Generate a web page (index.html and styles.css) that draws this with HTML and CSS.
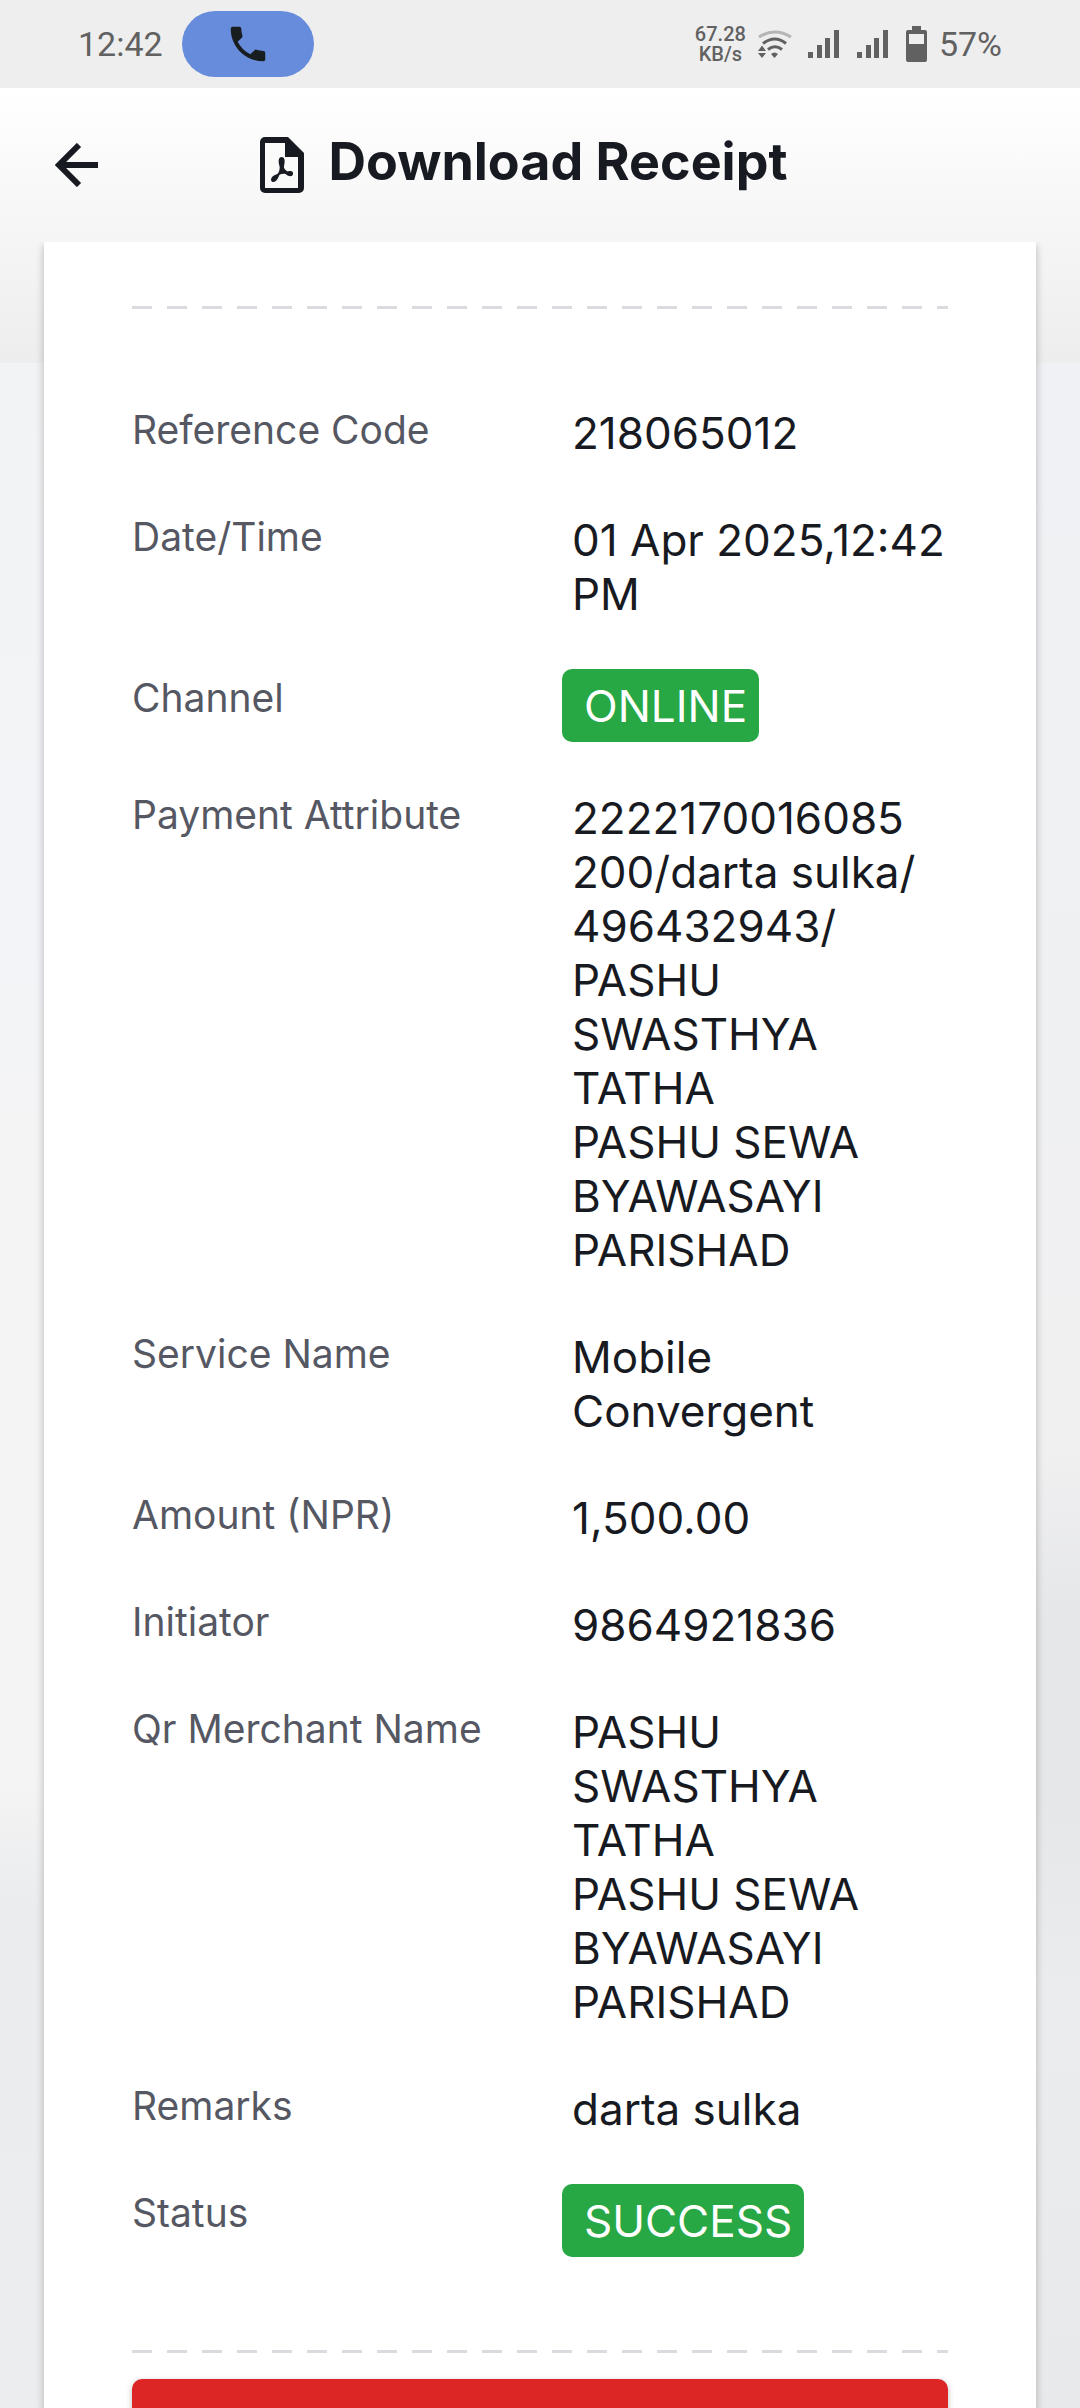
FILE: index.html
```html
<!DOCTYPE html>
<html lang="en">
<head>
<meta charset="utf-8">
<meta name="viewport" content="width=device-width, initial-scale=1">
<title>Download Receipt</title>
<link rel="stylesheet" href="styles.css">
</head>
<body>
<div class="app">
  <div class="status-bar">
    <span class="clock">12:42</span>
    <span class="call-pill">
      <svg class="call-icon" viewBox="0 0 24 24" aria-hidden="true"><path d="M6.6 10.8c1.4 2.8 3.8 5.1 6.6 6.6l2.2-2.2c.3-.3.7-.4 1-.2 1.100.4 2.300.6 3.600.6.6 0 1 .4 1 1V20c0 .6-.4 1-1 1C10.600 21 3 13.400 3 4c0-.6.4-1 1-1h3.500c.6 0 1 .4 1 1 0 1.200.2 2.500.6 3.600.1.3 0 .7-.2 1z"/></svg>
    </span>
    <span class="net-speed">67.28<br>KB/s</span>
    <svg class="wifi" viewBox="0 0 34 28" aria-hidden="true">
      <g fill="none" stroke-width="3">
        <path class="wifi-weak" d="M1 7Q17-3 33 7"/>
        <path d="M5 13.500Q17 4.500 28 13.500"/>
        <path d="M10 19.500Q17 14 24 19.500"/>
      </g>
      <path class="solid" d="M13 24Q16.500 21 20 24L16.500 28zM0 21h8L4 15.500zM0 23h8l-4 5z"/>
    </svg>
    <svg class="signal" viewBox="0 0 31 28" aria-hidden="true"><path d="M0 22h5v6H0zM9 15h5v13H9zM17 8h5v20h-5zM26 0h5v28h-5z"/></svg>
    <svg class="signal" viewBox="0 0 31 28" aria-hidden="true"><path d="M0 22h5v6H0zM9 15h5v13H9zM17 8h5v20h-5zM26 0h5v28h-5z"/></svg>
    <svg class="battery" viewBox="0 0 21 36" aria-hidden="true"><path fill-rule="evenodd" d="M6 0h9v4h4a2 2 0 0 1 2 2v28a2 2 0 0 1-2 2H2a2 2 0 0 1-2-2V6a2 2 0 0 1 2-2h4zM3 8v10h15V8z"/></svg>
    <span class="battery-level">57%</span>
  </div>
  <header class="header">
    <button class="back" type="button" aria-label="Back">
      <svg viewBox="0 0 44 44" aria-hidden="true"><path d="M43 22H4M24 2L4 22l20 20" fill="none" stroke="currentColor" stroke-width="6"/></svg>
    </button>
    <h1 class="title">
      <svg class="pdf" viewBox="0 0 44 56" aria-hidden="true">
        <path fill-rule="evenodd" d="M5 0h23l16 16v35a5 5 0 0 1-5 5H5a5 5 0 0 1-5-5V5a5 5 0 0 1 5-5zM5 6v45h33V20H25V6z"/>
        <path d="M21.500 20c3 0 4 3 2.500 9-.5 2 1 4 3.500 5.500 4-1 6 0 5.500 2.500-.5 3-4 3-7.500 0-2-.5-4-.2-6 .8-2 5-4 7.500-6.500 7.200-3-.6-2.500-4.500 1-6.500 2-1 4-1.500 4.500-3 1-2 1.500-4.500 1-6.500-1.500-5-1-9 2-9z"/>
      </svg>
      <span class="title-text">Download Receipt</span>
    </h1>
  </header>
  <main class="content">
    <section class="card">
      <div class="divider"></div>
      <dl class="details">
        <div class="row"><dt>Reference Code</dt><dd>218065012</dd></div>
        <div class="row"><dt>Date/Time</dt><dd>01 Apr 2025,12:42<br>PM</dd></div>
        <div class="row"><dt>Channel</dt><dd class="badge-cell"><span class="badge">ONLINE</span></dd></div>
        <div class="row"><dt>Payment Attribute</dt><dd>2222170016085<br>200/darta sulka/<br>496432943/<br>PASHU<br>SWASTHYA<br>TATHA<br>PASHU SEWA<br>BYAWASAYI<br>PARISHAD</dd></div>
        <div class="row"><dt>Service Name</dt><dd>Mobile<br>Convergent</dd></div>
        <div class="row"><dt>Amount (NPR)</dt><dd>1,500.00</dd></div>
        <div class="row"><dt>Initiator</dt><dd>9864921836</dd></div>
        <div class="row"><dt>Qr Merchant Name</dt><dd>PASHU<br>SWASTHYA<br>TATHA<br>PASHU SEWA<br>BYAWASAYI<br>PARISHAD</dd></div>
        <div class="row"><dt>Remarks</dt><dd>darta sulka</dd></div>
        <div class="row"><dt>Status</dt><dd class="badge-cell"><span class="badge">SUCCESS</span></dd></div>
      </dl>
      <div class="divider"></div>
      <button class="action" type="button" aria-label="Download"></button>
    </section>
  </main>
</div>
</body>
</html>
```
FILE: styles.css
```css
* {
  box-sizing: border-box;
}

body {
  margin: 0;
  font-family: Inter, "Open Sans", sans-serif;
  color: #181a22;
}

.app {
  display: flex;
  flex-direction: column;
  height: 100vh;
  overflow: hidden;
  background:
    linear-gradient(#ffffff, #ededed) 0 88px / 100% 275px no-repeat,
    linear-gradient(#f1f3f5 15%, #f3f4f7 40%, #f4f4f4 50%, #f5f4f4 74%, #eaecee 79%, #ecedef) left / 50% 100% no-repeat,
    linear-gradient(#eff1f4 15%, #f0f0f1 60%, #e6e7e9 67%, #e6e7e9 75%, #ebecee 83%, #e8e9eb) right / 50% 100% no-repeat;
}

.status-bar {
  display: flex;
  flex: none;
  align-items: center;
  height: 88px;
  padding: 0 78px;
  background: #eeeeee;
  color: #616161;
  font-family: Roboto, sans-serif;
  font-size: 34px;
}

.status-bar svg {
  fill: #616161;
}

.clock {
  width: 104px;
}

.call-pill {
  display: flex;
  align-items: center;
  justify-content: center;
  width: 132px;
  height: 66px;
  border-radius: 33px;
  background: #678cdc;
}

.status-bar .call-icon {
  width: 46px;
  height: 46px;
  fill: #181d20;
}

.net-speed {
  margin-left: auto;
  font-size: 20px;
  font-weight: 500;
  line-height: 20px;
  text-align: center;
}

.wifi {
  width: 34px;
  height: 28px;
  margin: 0 16px 0 12px;
  stroke: #616161;
}

.wifi .wifi-weak {
  stroke: #b5b5b5;
}

.wifi .solid {
  stroke: none;
}

.signal {
  width: 31px;
  height: 28px;
  margin-right: 18px;
}

.battery {
  width: 21px;
  height: 36px;
  margin-right: 12px;
}

.header {
  display: grid;
  flex: none;
  grid-template-columns: 200px 1fr 232px;
  align-items: center;
  height: 154px;
}

.back {
  width: 44px;
  height: 44px;
  margin-left: 55px;
  padding: 0;
  border: 0;
  background: none;
  color: #181a22;
}

.back svg {
  display: block;
}

.title {
  display: flex;
  align-items: center;
  justify-content: center;
  gap: 24px;
  margin: 0;
  font-size: 52px;
  font-weight: 700;
  white-space: nowrap;
}

.title-text {
  padding-bottom: 8px;
}

.pdf {
  width: 44px;
  height: 56px;
  fill: #181a22;
}

.content {
  flex: 1;
  min-height: 0;
  padding: 0 44px;
  overflow: hidden;
}

.card {
  padding: 64px 88px 88px;
  background: #ffffff;
  box-shadow: 0 3px 8px rgba(0, 0, 0, 0.25);
}

.divider {
  height: 3px;
  background: repeating-linear-gradient(90deg, #dadbde 0 20px, transparent 20px 35px);
}

.details {
  display: grid;
  gap: 53px;
  margin: 97px 0;
}

.row {
  display: grid;
  grid-template-columns: 440px 1fr;
}

dt {
  color: #555863;
  font-size: 39px;
  line-height: 48px;
}

dd {
  margin: 0;
  font-size: 44px;
  line-height: 54px;
  white-space: nowrap;
}

.badge-cell {
  height: 64px;
}

.badge {
  display: inline-block;
  margin: -5px 0 -4px -10px;
  padding: 10px 12px 9px 22px;
  border-radius: 10px;
  background: #28a745;
  color: #ffffff;
}

.action {
  display: block;
  width: 100%;
  height: 132px;
  margin-top: 26px;
  border: 0;
  border-radius: 10px;
  background: #dc2626;
  box-shadow: 0 2px 6px rgba(0, 0, 0, 0.25);
}
```
